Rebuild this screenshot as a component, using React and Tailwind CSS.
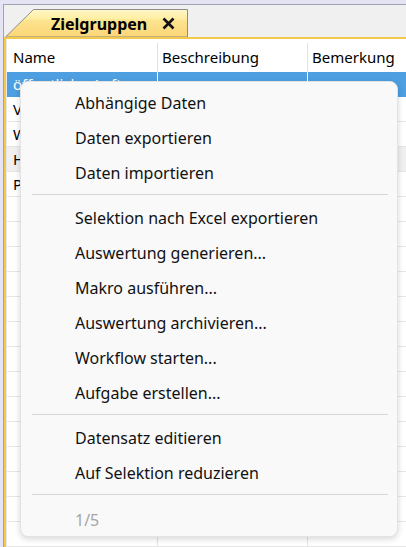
import React from "react";

const rows = [
  { name: "öffentliche Auftraggeber", selected: true },
  { name: "Verbände" },
  { name: "Wirtschaft" },
  { name: "Handel", muted: true },
  { name: "Presse" },
  ...Array.from({ length: 14 }, () => ({ name: "" })),
];

const menuGroups = [
  ["Abhängige Daten", "Daten exportieren", "Daten importieren"],
  [
    "Selektion nach Excel exportieren",
    "Auswertung generieren...",
    "Makro ausführen...",
    "Auswertung archivieren...",
    "Workflow starten...",
    "Aufgabe erstellen...",
  ],
  ["Datensatz editieren", "Auf Selektion reduzieren"],
];

const font = { fontFamily: '"Noto Sans", "Open Sans", Arial, sans-serif' };

function Tab() {
  return (
    <div className="relative ml-[1px] mt-[4px] h-[28px] w-[183px]">
      <svg className="absolute inset-0" width="183" height="28" viewBox="0 0 183 28">
        <defs>
          <linearGradient id="tabFill" x1="0" y1="0" x2="0" y2="1">
            <stop offset="0" stopColor="#fff7c8" />
            <stop offset="0.32" stopColor="#ffefa4" />
            <stop offset="0.42" stopColor="#fde28e" />
            <stop offset="1" stopColor="#fcd677" />
          </linearGradient>
        </defs>
        <path d="M0.5 28 L28.5 0.5 L182.5 0.5 L182.5 28 Z" fill="url(#tabFill)" stroke="#8c8c8c" strokeWidth="1" />
      </svg>
      <div className="relative flex h-full items-center pl-[46px] pt-[1px]">
        <span className="text-[16px] font-bold leading-none text-black">Zielgruppen</span>
        <svg className="ml-[15px]" width="13" height="13" viewBox="0 0 13 13">
          <path d="M1.5 1.5 L11.5 11.5 M11.5 1.5 L1.5 11.5" stroke="#111" strokeWidth="2.6" strokeLinecap="butt" />
        </svg>
      </div>
    </div>
  );
}

function Grid() {
  return (
    <div className="flex flex-1 flex-col border-l-2 border-t-2 border-[#f3c94c] bg-white">
      <div className="flex flex-1 flex-col border-l border-[#e8e8e8] bg-white">
        <div className="flex h-[33px] items-center pt-[4px] text-[15px] text-black">
          <div className="flex h-full w-[151px] items-center border-r border-[#e2e2e2] pl-[6px]">Name</div>
          <div className="flex h-full w-[150px] items-center border-r border-[#e2e2e2] pl-[4px]">Beschreibung</div>
          <div className="flex h-full flex-1 items-center pl-[4px]">Bemerkung</div>
        </div>
        {rows.map((r, i) => (
          <div
            key={i}
            className={
              "flex h-[25px] shrink-0 items-center border-b text-[15px] " +
              (r.selected
                ? "border-[#4d9fe1] bg-[#4d9fe1] text-white"
                : r.muted
                ? "border-[#e6e6e6] bg-[#f0f0f0] text-black"
                : "border-[#e6e6e6] bg-white text-black")
            }
          >
            <div
              className={
                "flex h-full w-[151px] items-center overflow-hidden whitespace-nowrap border-r pl-[6px] " +
                (r.selected ? "border-white" : "border-[#e2e2e2]")
              }
            >
              {r.name}
            </div>
            <div
              className={
                "h-full w-[150px] border-r " + (r.selected ? "border-white" : "border-[#e2e2e2]")
              }
            />
            <div className="h-full flex-1" />
          </div>
        ))}
      </div>
    </div>
  );
}

function ContextMenu() {
  return (
    <div className="absolute left-[20px] top-[81px] w-[378px] rounded-[8px] border border-[#e3e3e3] bg-[#f9f9f9] pb-[1px] pt-[3px] text-[16px] text-[#111] shadow-[0_2px_6px_rgba(0,0,0,0.16)]">
      {menuGroups.map((group, gi) => (
        <React.Fragment key={gi}>
          {group.map((label) => (
            <div key={label} className="flex h-[35px] items-center pl-[54px] leading-none">
              {label}
            </div>
          ))}
          <div className="mx-[11px] mb-[5px] mr-[9px] mt-[4px] h-px bg-[#d6d6d6]" />
        </React.Fragment>
      ))}
      <div className="flex h-[35px] items-center pl-[54px] pt-[4px] leading-none text-[#a6a6a6]">1/5</div>
    </div>
  );
}

export default function App() {
  return (
    <div
      className="relative flex h-[547px] w-[406px] flex-col overflow-hidden bg-[#e4e4f4] pl-[3px] pt-[4px]"
      style={font}
    >
      <div className="flex flex-1 flex-col border-l border-t border-[#a2a2b0] bg-[#f0f0f0]">
        <div className="flex h-[32px] shrink-0 items-start">
          <Tab />
        </div>
        <Grid />
      </div>
      <ContextMenu />
    </div>
  );
}
